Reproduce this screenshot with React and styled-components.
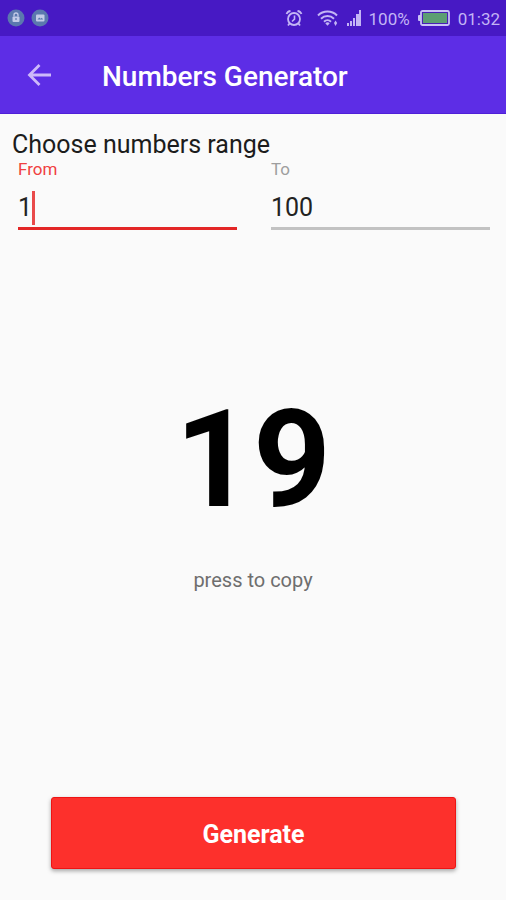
import React, { useState } from 'react'
import styled, { createGlobalStyle } from 'styled-components'

const App = () => {
  const [from, setFrom] = useState('1')
  const [to, setTo] = useState('100')
  const [focused, setFocused] = useState('from')
  const [result, setResult] = useState(19)

  const generate = () => {
    const min = Math.min(Number(from), Number(to))
    const max = Math.max(Number(from), Number(to))
    setResult(min + Math.floor(Math.random() * (max - min + 1)))
  }

  return (
    <Screen>
      <GlobalStyle />
      <StatusBar>
        <StatusGroup $gap={6}>
          <LockBadge />
          <PictureBadge />
        </StatusGroup>
        <StatusGroup $gap={14}>
          <AlarmIcon />
          <StatusGroup $gap={7}>
            <WifiIcon />
            <SignalIcon />
            <StatusText>100%</StatusText>
            <BatteryIcon />
            <StatusText>01:32</StatusText>
          </StatusGroup>
        </StatusGroup>
      </StatusBar>

      <Toolbar>
        <BackButton type="button" aria-label="Back">
          <BackIcon />
        </BackButton>
        <Title>Numbers Generator</Title>
      </Toolbar>

      <Content>
        <Heading>Choose numbers range</Heading>
        <Range>
          <NumberField
            id="from"
            label="From"
            value={from}
            active={focused === 'from'}
            onFocus={() => setFocused('from')}
            onChange={setFrom}
          />
          <NumberField
            id="to"
            label="To"
            value={to}
            active={focused === 'to'}
            onFocus={() => setFocused('to')}
            onChange={setTo}
          />
        </Range>

        <Result
          type="button"
          onClick={() => navigator.clipboard?.writeText(String(result))}
        >
          <ResultNumber>{result}</ResultNumber>
          <Hint>press to copy</Hint>
        </Result>
      </Content>

      <Footer>
        <GenerateButton type="button" onClick={generate}>
          Generate
        </GenerateButton>
      </Footer>
    </Screen>
  )
}

export default App

const NumberField = ({ id, label, value, active, onFocus, onChange }) => (
  <Field>
    <Label htmlFor={id} $active={active}>
      {label}
    </Label>
    <InputLine $active={active}>
      <Input
        id={id}
        inputMode="numeric"
        value={value}
        style={{ width: `${Math.max(value.length, 1)}ch` }}
        onFocus={onFocus}
        onChange={e => onChange(e.target.value.replace(/\D/g, ''))}
      />
      {active && <Caret />}
    </InputLine>
  </Field>
)

const LockBadge = () => (
  <svg width="18" height="18" viewBox="0 0 18 18">
    <circle cx="9" cy="9" r="8.5" fill="#5b78ae" />
    <rect x="5.5" y="7.5" width="7" height="5.5" rx="1" fill="#c3cbe8" />
    <path d="M7 7.5V6a2 2 0 0 1 4 0v1.5" fill="none" stroke="#c3cbe8" strokeWidth="1.3" />
    <path d="M9 9v2" stroke="#5b78ae" strokeWidth="1.2" />
  </svg>
)

const PictureBadge = () => (
  <svg width="18" height="18" viewBox="0 0 18 18">
    <circle cx="9" cy="9" r="8.5" fill="#5b78ae" />
    <rect x="5" y="5.5" width="8.5" height="7" rx="1" fill="#c3cbe8" />
    <path d="M6.5 10.5l1.7-2 1.4 1.3 1.2-1 1.4 1.7z" fill="#5b78ae" />
  </svg>
)

const AlarmIcon = () => (
  <svg width="18" height="18" viewBox="0 0 18 18" fill="none" stroke="#c3b5f5">
    <circle cx="9" cy="10" r="6" strokeWidth="1.8" />
    <path d="M9.5 6.5v3.7L7 12.5" strokeWidth="1.6" />
    <path d="M1.5 5a5 5 0 0 1 4-3M16.5 5a5 5 0 0 0-4-3M4.5 14.5L3 16.5M13.5 14.5l1.5 2" strokeWidth="1.8" />
  </svg>
)

const WifiIcon = () => (
  <svg width="22" height="18" viewBox="0 0 22 18" fill="none" stroke="#c3b5f5">
    <path d="M1 6.5a13.5 13.5 0 0 1 19 0M4 9.7a9.3 9.3 0 0 1 13 0M7 12.7a5 5 0 0 1 7 0" strokeWidth="2" />
    <path d="M8.3 14.2a3.5 3.5 0 0 1 4.4 0l-2.2 2.5z" fill="#c3b5f5" stroke="none" />
    <path d="M18.5 11.5l1.7 2.5-1.7 3-1.5-3z" fill="#c3b5f5" stroke="none" />
  </svg>
)

const SignalIcon = () => (
  <svg width="16" height="18" viewBox="0 0 16 18" fill="#c3b5f5">
    <rect x="1" y="14" width="2" height="3" />
    <rect x="4" y="12" width="2" height="5" />
    <rect x="7" y="9" width="2" height="8" />
    <rect x="10" y="5" width="3" height="12" />
    <rect x="13" y="1" width="2" height="16" />
  </svg>
)

const BatteryIcon = () => (
  <svg width="34" height="16" viewBox="0 0 34 16">
    <path d="M4 5H2a1 1 0 0 0-1 1v4a1 1 0 0 0 1 1h2z" fill="#c9c2f5" />
    <rect x="4" y="1" width="28" height="14" rx="1.5" fill="#4a1fb8" stroke="#c9c2f5" strokeWidth="1.8" />
    <rect x="6" y="3" width="24" height="10" fill="#5d9e73" />
  </svg>
)

const BackIcon = () => (
  <svg width="24" height="24" viewBox="0 0 24 24" fill="none" stroke="#cdb9fa" strokeWidth="2.8">
    <path d="M24 12H3M12.5 2L2.5 12l10 10" />
  </svg>
)

const GlobalStyle = createGlobalStyle`
  * {
    box-sizing: border-box;
  }

  body {
    margin: 0;
    background: #fafafa;
    font-family: Roboto, 'Liberation Sans', sans-serif;
  }

  button,
  input {
    margin: 0;
    padding: 0;
    border: 0;
    background: none;
    font-family: inherit;
  }

  button {
    cursor: pointer;
  }

  svg {
    display: block;
    flex-shrink: 0;
  }
`

const Screen = styled.div`
  display: flex;
  flex-direction: column;
  min-height: 100vh;
  background: #fafafa;
`

const StatusBar = styled.div`
  display: flex;
  align-items: center;
  justify-content: space-between;
  height: 36px;
  padding: 0 6px 0 7px;
  background: #4719c4;
`

const StatusGroup = styled.div`
  display: flex;
  align-items: center;
  gap: ${p => p.$gap}px;
`

const StatusText = styled.span`
  padding-top: 2px;
  font-size: 17px;
  line-height: 20px;
  color: #c3b5f5;
`

const Toolbar = styled.header`
  display: flex;
  align-items: center;
  height: 78px;
  padding: 0 27px;
  background: #5d2de6;
  border-bottom: 1px solid #4f1fd8;
`

const BackButton = styled.button`
  display: flex;
`

const Title = styled.h1`
  margin: 0 0 0 51px;
  padding-top: 4px;
  font-size: 28px;
  font-weight: 500;
  line-height: 32px;
  color: #fff;
`

const Content = styled.main`
  display: flex;
  flex: 1;
  flex-direction: column;
`

const Heading = styled.h2`
  margin: 15px 12px 0;
  font-size: 25px;
  font-weight: 400;
  line-height: 32px;
  color: #1c1c1c;
`

const Range = styled.div`
  display: grid;
  grid-template-columns: 1fr 1fr;
  gap: 34px;
  padding: 0 16px 0 18px;
`

const Field = styled.div`
  display: flex;
  flex-direction: column;
`

const Label = styled.label`
  font-size: 17px;
  line-height: 16px;
  color: ${p => (p.$active ? '#f04040' : '#9e9e9e')};
`

const InputLine = styled.div`
  display: flex;
  align-items: center;
  height: 53px;
  padding-top: 12px;
  border-bottom: 3px solid ${p => (p.$active ? '#e32626' : '#c2c2c2')};
`

const Input = styled.input`
  font-size: 25px;
  line-height: 32px;
  color: #222;
  caret-color: transparent;
  outline: none;
`

const Caret = styled.span`
  width: 3px;
  height: 34px;
  background: #e94a4a;
`

const Result = styled.button`
  display: flex;
  flex: 1;
  flex-direction: column;
  align-items: center;
  justify-content: center;
  gap: 28px;
  padding-bottom: 56px;
`

const ResultNumber = styled.span`
  font-size: 136px;
  font-weight: 700;
  line-height: 160px;
  color: #000;
`

const Hint = styled.span`
  font-size: 20px;
  line-height: 24px;
  color: #6e6e6e;
`

const Footer = styled.footer`
  display: flex;
  padding: 0 50px 31px 51px;
`

const GenerateButton = styled.button`
  flex: 1;
  height: 72px;
  padding-top: 4px;
  font-size: 25px;
  font-weight: 700;
  line-height: 32px;
  color: #fff;
  background: #fd302c;
  border: 1px solid #ee1414;
  border-radius: 3px;
  box-shadow: 0 2px 4px rgba(0, 0, 0, 0.35);
`
